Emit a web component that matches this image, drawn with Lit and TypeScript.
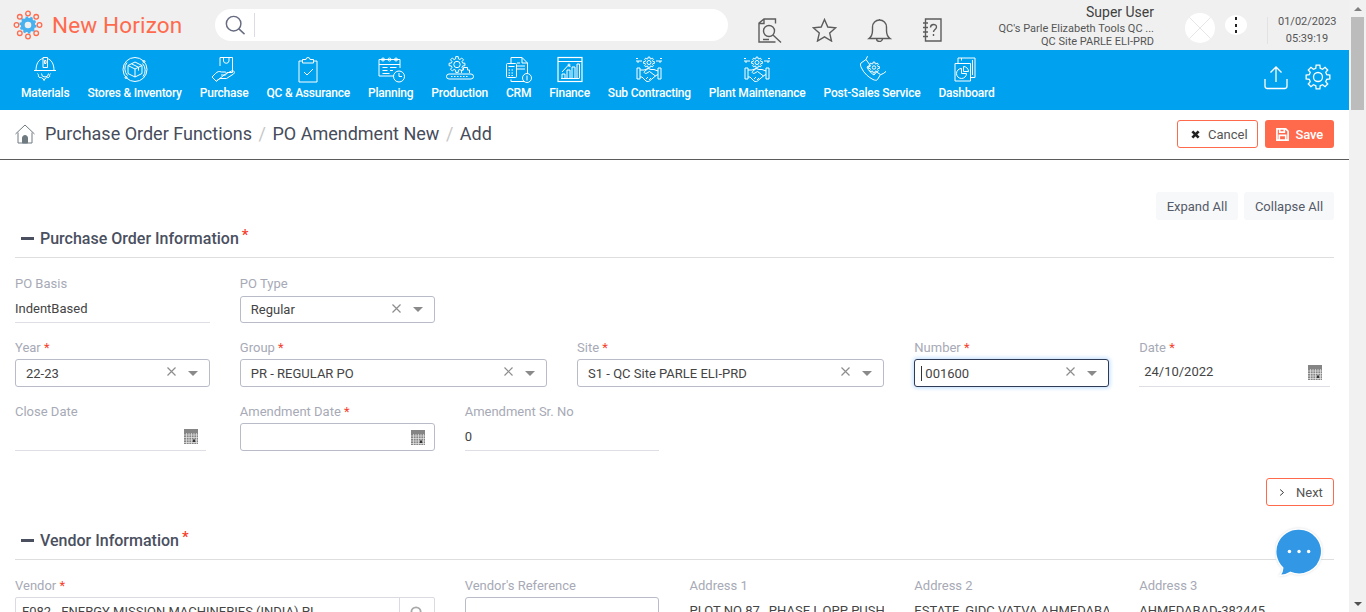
import { LitElement, html, css, svg } from "lit";
import { customElement } from "lit/decorators.js";

function gear(cx: number, cy: number, ro: number, ri: number, n: number): string {
  const pts: string[] = [];
  const step = (Math.PI * 2) / n;
  for (let i = 0; i < n; i++) {
    const a = i * step - Math.PI / 2;
    const w = step * 0.2;
    const p: [number, number][] = [
      [ri, a - step * 0.32],
      [ro, a - w],
      [ro, a + w],
      [ri, a + step * 0.32],
    ];
    for (const [r, t] of p) pts.push(`${(cx + r * Math.cos(t)).toFixed(2)} ${(cy + r * Math.sin(t)).toFixed(2)}`);
  }
  return "M" + pts.join("L") + "Z";
}

const handshake = svg`
  <path d=${gear(14, 6.500, 5.500, 4, 8)}/><circle cx="14" cy="6.500" r="2"/>
  <path d="M1 5h6M21 5h6M1 2.500h2M25 2.500h2M3 5v2M25 5v2"/>
  <path d="M2 12h3v11H2zM23 12h3v11h-3zM5 14h4l4-1.500 3 1h3l4 1.500M5 21h2l4 4c1.500 1 2.500.5 3.500 0l6.500-5.500 2-1M13 12.500l-3.500 3c-1 1.500 1 2.500 2.500 1.500l2.500-1.500 6 4.500M11 23l2-2M14 24l2-2"/>`;

const navIcons: Record<string, unknown> = {
  materials: svg`<path d="M3 14.500h22M5 14.500C5 8 7.500 3.500 12 2.500M23 14.500c0-6.500-2.500-11-7-12M12 11.500V1.500h4.500v10zM13.500 4.500h1.500v3h-1.500z"/>
    <path d="M6.500 17.500c1 1 1.200 1.800.8 2.800l1.700 1.500c.9-.5 1.700-.4 2.300.6h.7l1 2.100h.1l1-2.100h.7c.6-1 1.400-1.100 2.300-.6l1.700-1.500c-.4-1-.2-1.800.8-2.800M10.500 17.500a3.500 3.500 0 0 0 7 0"/>`,
  stores: svg`<circle cx="14" cy="13.500" r="12"/><path d="M6 6.500a10 10 0 0 0 .5 13M22 20.500a10 10 0 0 0-.5-13"/><path d="M14 6l7 3.500v8L14 21l-7-3.500v-8zM7 9.500l7 3.500 7-3.500M14 13v8M10.500 7.800l7 3.500v3.300"/><circle cx="23" cy="5.500" r="1"/><circle cx="5" cy="21.500" r="1"/>`,
  purchase: svg`<path d="M10 10V1.500h12.500v15H17M13.500 1.500V5a2.800 2.800 0 0 0 5.500 0V1.500"/><path d="M2 21l3.500-3.500c2-2 3.500-2.500 6-1.500h3.500c2 0 2 3 0 3h-4M15.500 18l6-3c2.500-1 3.800 1.500 2 3l-7 4.500H10L6.500 25z"/><path d="M2 21l4.500 4.500"/>`,
  qc: svg`<path d="M8.500 5H5v21h18V5h-3.500M8.500 3.500h3.500a2 2 0 0 1 4 0h3.500V7h-11zM10 16l3 3 6-6"/>`,
  planning: svg`<path d="M17 20H2V3.500h21V12"/><path d="M2 8.500h21M5.500 11.500h5M13 11.500h6.500M5.500 14.500h5M13 14.500h3M5.500 17.500h7"/><circle cx="6" cy="3.500" r="1.500"/><circle cx="12.500" cy="3.500" r="1.500"/><circle cx="19" cy="3.500" r="1.500"/><circle cx="22" cy="20.500" r="5.500"/><path d="M22 17v3.500h3"/>`,
  production: svg`<path d=${gear(11, 8.500, 8, 5.800, 8)}/><circle cx="11" cy="8.500" r="3.200"/><path d="M15.500 17v-3h2v-2.500h4V14h2v3"/><path d="M3 18h22a2.500 2.500 0 0 1 0 5H3a2.500 2.500 0 0 1 0-5z"/><path d="M5 20.500h18" stroke-dasharray="1.500 1.500"/>`,
  crm: svg`<path d="M6 7V1.500h11l5.500 5.500v10M17 1.500V7h5.500M6 23.500v2h14M12 10h8M12 13h8M12 7h3"/><rect x="1.500" y="7.500" width="10" height="14" rx="1"/><path d="M3.500 10.500h6M3.500 14h1.500M6.500 14h1.500M3.500 17h1.500M6.500 17h1.500M3.500 19.500h1.500M6.500 19.500h1.500"/><circle cx="22" cy="22" r="4.500"/><path d="M22 19.500v5"/>`,
  finance: svg`<rect x="2" y="1.500" width="24" height="24" stroke-width="1.200"/><path d="M2 5.500h24M5 22.500h18M6 22.500V18h3v4.500M11 22.500V14h3v8.500M16 22.500V11h3v11.500M21 22.500V8h2.500v14.500M6 16l6-6.500 2.500 1"/><circle cx="13" cy="9" r="1"/>`,
  handshake,
  post: svg`<path d="M8 3.500L3 7c-1 1-.5 3 .5 5 2.500 5.500 7.500 9.500 11.500 11.500 2 1 4 1 4.500 0l3-5-4-2.500-2.500 3c-2-1-6-5-7-8l3-2z"/><path d="M8 3.500A12 12 0 1 1 23 18.500"/><path d=${gear(16, 11.500, 5.500, 4, 8)}/><circle cx="16" cy="11.500" r="1.700"/>`,
  dash: svg`<path d="M3 7.500h15.500V25H3zM6 7.500V2h17v19.500h-4.500M20.500 4v15M9.500 2v2.500"/><path d="M9.500 12.500a5 5 0 1 0 5 5h-5z"/><path d="M11.500 10.500a5 5 0 0 1 5 5h-5z"/>`,
};

const navItems: [string, string][] = [
  ["Materials", "materials"],
  ["Stores & Inventory", "stores"],
  ["Purchase", "purchase"],
  ["QC & Assurance", "qc"],
  ["Planning", "planning"],
  ["Production", "production"],
  ["CRM", "crm"],
  ["Finance", "finance"],
  ["Sub Contracting", "handshake"],
  ["Plant Maintenance", "handshake"],
  ["Post-Sales Service", "post"],
  ["Dashboard", "dash"],
];

const star = html`<span class="req">*</span>`;

const calendar = html`<svg class="cal" viewBox="0 0 14 15" width="14" height="15">
  <rect width="14" height="15" fill="#858585"></rect>
  <path d="M2.500 4v11M5 4v11M7.500 4v11M10 4v11M12.500 4v11M0 6h14M0 8.500h14M0 11h14M0 13.500h14" stroke="#e8e8e8" stroke-width=".7"></path>
  <rect x="9" y="10.500" width="2" height="2.500" fill="#333"></rect>
</svg>`;

const gearLogo = html`<svg viewBox="0 0 32 32" width="32" height="32">
  <g fill="none" stroke="#ff6a4d" stroke-width="1.300">
    <circle cx="16" cy="4.500" r="2.300"></circle><circle cx="16" cy="27.500" r="2.300"></circle>
    <circle cx="4.500" cy="16" r="2.300"></circle><circle cx="27.500" cy="16" r="2.300"></circle>
    <circle cx="7.800" cy="7.800" r="2.300"></circle><circle cx="24.200" cy="7.800" r="2.300"></circle>
    <circle cx="7.800" cy="24.200" r="2.300"></circle><circle cx="24.200" cy="24.200" r="2.300"></circle>
  </g>
  <circle cx="16" cy="16" r="5.300" fill="none" stroke="#46b1ee" stroke-width="4"></circle>
  <circle cx="16" cy="16" r="7.700" fill="none" stroke="#46b1ee" stroke-width="1.800" stroke-dasharray="2.500 2.300"></circle>
</svg>`;

@customElement("app-root")
export class AppRoot extends LitElement {
  static styles = css`
    :host {
      display: flex;
      width: 1366px;
      height: 612px;
      overflow: hidden;
      position: relative;
      background: #fff;
      font-family: Roboto, "Liberation Sans", sans-serif;
      color: #444a57;
    }
    * { box-sizing: border-box; }
    .page { width: 1349px; flex: none; height: 612px; overflow: hidden; }

    .sb { width: 17px; background: #f1f1f1; position: relative; display: flex; flex-direction: column; align-items: center; }
    .sb-btn { height: 17px; flex: none; display: flex; align-items: center; justify-content: center; width: 100%; }
    .sb-up { width: 0; height: 0; border: 4px solid transparent; border-top: 0; border-bottom: 4px solid #7f7f7f; }
    .sb-down { width: 0; height: 0; border: 4px solid transparent; border-bottom: 0; border-top: 4px solid #505050; }
    .sb-track { flex: 1; width: 100%; padding: 0 2px; }
    .sb-thumb { height: 93px; background: #bcbcbc; width: 13px; }

    .top { height: 50px; background: #f0f0f0; display: flex; align-items: stretch; }
    .logo { width: 215px; flex: none; display: flex; align-items: center; padding-left: 12px; }
    .logo svg { flex: none; margin-right: 8px; }
    .logo span { font-size: 22.500px; color: #ff6a4d; letter-spacing: 0.15px; white-space: nowrap; }
    .search { width: 513px; height: 32px; margin-top: 9px; background: #fff; border-radius: 16px; display: flex; align-items: center; padding-left: 10px; flex: none; }
    .search svg { flex: none; }
    .search i { width: 1px; height: 24px; background: #dcdde3; margin-left: 9px; display: block; }
    .ticons { display: flex; gap: 30px; margin-left: 30px; padding-top: 18px; flex: none; align-items: flex-start; }
    .ticons svg { display: block; fill: none; stroke: #5c5c5c; stroke-width: 1.400; }
    .user { flex: none; width: 212px; text-align: right; padding-top: 4px; white-space: nowrap; display: flex; flex-direction: column; }
    .user b { font-weight: 400; font-size: 14px; line-height: 17px; color: #3f3f3f; }
    .user span { font-size: 11px; line-height: 13px; color: #555; }
    .user span.a { margin-top: 1px; }
    .avatar { flex: none; width: 30px; height: 30px; border-radius: 50%; background: #fff; margin: 13px 0 0 31px; overflow: hidden; }
    .avatar svg { display: block; }
    .kebab { flex: none; width: 22px; height: 20px; border-radius: 50%; background: #fff; margin: 15px 0 0 10px; display: flex; flex-direction: column; align-items: center; justify-content: center; gap: 3.500px; }
    .kebab i { width: 2.500px; height: 3px; background: #222; display: block; }
    .dt { flex: none; margin: 13px 0 0 20px; padding-left: 11px; width: 69px; font-size: 11px; line-height: 17px; text-align: center; color: #555; white-space: nowrap; position: relative; }
    .dt::before { content: ""; position: absolute; left: 0; top: 4px; width: 1px; height: 27px; background: #e2e2e2; }

    .nav { height: 60px; background: #00a2ef; display: flex; align-items: flex-start; padding-left: 12px; position: relative; }
    .ni { padding: 6px 9px 0; display: flex; flex-direction: column; align-items: center; color: #fff; font-size: 12px; font-weight: 500; white-space: nowrap; }
    .ni svg { display: block; fill: none; stroke: #fff; stroke-width: 1; margin: 0 -10px 3px; }
    .ni span { line-height: 14px; letter-spacing: -0.22px; }
    .nav-r { margin-left: auto; display: flex; gap: 16px; padding: 14px 18px 0 0; }
    .nav-r svg { display: block; fill: none; stroke: #fff; stroke-width: 1.300; }

    .crumbs { height: 50px; border-bottom: 1px solid #5b5b5b; display: flex; align-items: flex-start; padding: 10px 15px 0; }
    .crumbs svg.home { flex: none; margin: 4px 10px 0 0; }
    .crumbs .t { font-size: 18px; line-height: 28px; color: #464c5a; white-space: nowrap; }
    .crumbs .t u { text-decoration: none; color: #c7c7c7; margin: 0 6.500px; }
    .crumbs .acts { margin-left: auto; display: flex; gap: 7px; }
    .btn { height: 28px; border-radius: 3px; font-size: 13px; display: flex; align-items: center; white-space: nowrap; }
    .btn-o { border: 1px solid #ff6a4d; background: #fff; color: #555; }
    .btn-cancel { width: 81px; padding-left: 13px; gap: 8px; }
    .btn-save { width: 69px; background: #ff6a4d; color: #fff; padding-left: 11px; gap: 6.500px; font-weight: 500; letter-spacing: -0.1px; }
    .btn-next { width: 68px; padding-left: 12px; gap: 11px; }

    .exp { display: flex; justify-content: flex-end; gap: 6px; padding: 32px 15px 0; }
    .btn-l { height: 28px; background: #f7f8fa; border-radius: 3px; font-size: 13px; color: #555b68; display: flex; align-items: center; justify-content: center; width: 90px; }
    .btn-l.w82 { width: 82px; }

    .sec { margin: 0 15px; height: 38px; border-bottom: 1px solid #dedede; display: flex; align-items: flex-start; font-size: 16px; font-weight: 500; color: #4a5060; padding: 9px 0 0 6px; line-height: 20px; white-space: nowrap; }
    .sec i { display: block; width: 13px; height: 2.500px; background: #4a5060; margin: 8px 6px 0 0; }
    .sec .req { font-size: 15px; margin-left: 3px; line-height: 14px; margin-top: -1px; }

    .grid { display: grid; grid-template-columns: repeat(12, 1fr); grid-auto-rows: 64px; width: 1349px; margin-top: 19px; }
    .c { padding: 0 15px; min-width: 0; }
    .s2 { grid-column: span 2; }
    .s3 { grid-column: span 3; }
    .s4 { grid-column: span 4; }
    .s8 { grid-column: span 8; }
    .lbl { font-size: 13px; line-height: 14px; height: 14px; color: #a7aab6; white-space: nowrap; margin-bottom: 4px; }
    .lbl.b5 { margin-bottom: 5px; }
    .req { color: #f5402c; }
    .ctl { height: 28px; border: 1px solid #b9bcc8; border-radius: 3px; display: flex; align-items: center; padding: 0 10px; font-size: 13px; color: #444; position: relative; white-space: nowrap; background: #fff; }
    .ctl .v { flex: 1; padding-top: 1px; }
    .t27 .ctl { height: 27px; }
    .t27 .v { padding-top: 0; }
    .ctl .x { width: 9px; height: 9px; flex: none; margin: -3px 12px 0 0; }
    .ctl .ar { width: 0; height: 0; border: 5px solid transparent; border-bottom: 0; border-top: 5px solid #8a8a8a; margin-right: 1px; flex: none; }
    .focus { border-color: #2f3a55; box-shadow: 0 0 4px 1px #bcdcff; }
    .focus .caret { width: 1px; height: 15px; background: #333; margin: 0 3px 0 -4px; flex: none; }
    .line { height: 28px; border-bottom: 1px solid #dedfe4; font-size: 13px; color: #444; display: flex; align-items: center; white-space: nowrap; justify-content: space-between; overflow: hidden; }
    .line.w191 { width: 191px; }
    .line.pad { padding: 0 8px 0 5px; }
    .line.pad span { margin-bottom: 3px; }
    .line.mt1 { margin-top: 1px; padding-bottom: 1px; }
    .ctl.cal-ctl { justify-content: flex-end; padding-right: 9px; }
    .ctl.cal-ctl svg { margin-top: 1px; }
    .cal { display: block; flex: none; }

    .next { display: flex; justify-content: flex-end; padding: 0 15px; margin-top: 9px; }
    .vendor { height: 600px; }
    .vctl { height: 40px; border: 1px solid #dadbe1; border-radius: 2px 2px 0 0; display: flex; font-size: 13px; color: #444; }
    .vctl .v { flex: 1; padding: 6px 6px; white-space: nowrap; overflow: hidden; }
    .vctl .b { width: 35px; border-left: 1px solid #dadbe1; display: flex; justify-content: center; padding-top: 8px; }
    .vref { height: 40px; border: 1px solid #b9bcc8; border-radius: 3px; }
    .addr { font-size: 13px; color: #444; white-space: nowrap; overflow: hidden; padding-top: 6px; }

    .chat { position: absolute; left: 1276px; top: 528px; display: block; filter: drop-shadow(0 0 1px #ddd); }
  `;

  private sel(v: string, focus = false) {
    return html`<div class="ctl ${focus ? "focus" : ""}">
      ${focus ? html`<span class="caret"></span>` : ""}
      <span class="v">${v}</span>
      <svg class="x" viewBox="0 0 9 9"><path d="M.5.5l8 8M8.500.5l-8 8" stroke="#8d8d8d" stroke-width="1.200"></path></svg>
      <span class="ar"></span>
    </div>`;
  }

  render() {
    return html`
      <div class="page">
        <header class="top">
          <div class="logo">${gearLogo}<span>New Horizon</span></div>
          <div class="search">
            <svg viewBox="0 0 22 22" width="20" height="20" fill="none" stroke="#666b80" stroke-width="1.600"><circle cx="9.500" cy="9.500" r="8"></circle><path d="M15 15l6.500 6"></path></svg>
            <i></i>
          </div>
          <div class="ticons">
            <svg viewBox="0 0 24 25" width="24" height="25"><path d="M17.500 5.500V1H6L1 5v19h16.500M6 1v4.500H1"/><circle cx="11" cy="13" r="5.500"/><path d="M15 17l8 7.500M5 21.500h6"/></svg>
            <svg viewBox="0 0 25 24" width="25" height="24"><path d="M12.500 1.500l3.300 7.500 7.900.8-6 5.300 1.800 7.900-7-4.200-7 4.200 1.800-7.900-6-5.300 7.900-.8z"/></svg>
            <svg viewBox="0 0 25 24" width="25" height="24"><path d="M2 20.500c2-1.500 3.500-3 3.500-8V9a7 7 0 0 1 14 0v3.500c0 5 1.500 6.500 3.500 8zM9.500 20.500a3 3 0 0 0 6 0M12.500 2V1"/></svg>
            <svg viewBox="0 0 20 24" width="20" height="24"><path d="M3.500 1h15.500v22H3.500zM1 5h5M1 9.500h5M1 14h5M1 18.500h5"/><path d="M8.500 9.500c0-4 6-4 6-.5 0 2.500-3 2.500-3 5M11.500 16v2"/></svg>
          </div>
          <div class="user">
            <b>Super User</b>
            <span class="a">QC's Parle Elizabeth Tools QC ...</span>
            <span>QC Site PARLE ELI-PRD</span>
          </div>
          <div class="avatar"><svg viewBox="0 0 30 30" width="30" height="30"><path d="M4 4l22 22M26 4L4 26" stroke="#e6e6e6" stroke-width="1"></path></svg></div>
          <div class="kebab"><i></i><i></i><i></i></div>
          <div class="dt">01/02/2023<br />05:39:19</div>
        </header>

        <nav class="nav">
          ${navItems.map(
            ([t, ic]) => html`<div class="ni">
              <svg viewBox="0 0 28 27" width="28" height="27">${navIcons[ic]}</svg>
              <span>${t}</span>
            </div>`
          )}
          <div class="nav-r">
            <svg viewBox="0 0 26 26" width="26" height="26"><path d="M13 18V3M7.500 8.500L13 3l5.500 5.500M2 15v7c0 1.500 1 2.500 2.500 2.500h17c1.500 0 2.500-1 2.500-2.500v-7"></path></svg>
            <svg viewBox="0 0 26 26" width="26" height="26"><circle cx="13" cy="13" r="4.500"></circle><path d=${gear(13, 13, 12, 9, 8)}></path></svg>
          </div>
        </nav>

        <div class="crumbs">
          <svg class="home" viewBox="0 0 20 20" width="20" height="20" fill="none" stroke="#6f7a80" stroke-width="1"><path d="M.5 10L10 1l9.500 9M3 8.500V19h14V8.500"></path><path d="M7.500 19v-5a2.500 2.500 0 0 1 5 0v5z" fill="#6f7a80"></path></svg>
          <div class="t">Purchase Order Functions<u>/</u>PO Amendment New<u>/</u>Add</div>
          <div class="acts">
            <div class="btn btn-o btn-cancel"><svg viewBox="0 0 10 10" width="9" height="9"><path d="M1.500 1.500l7 7M8.500 1.500l-7 7" stroke="#222" stroke-width="3"></path></svg>Cancel</div>
            <div class="btn btn-save"><svg viewBox="0 0 14 14" width="13" height="13" fill="none" stroke="#fff" stroke-width="1.800"><path d="M1 1h9.500L13 3.500V13H1zM4 1v3.500h5V1M3.500 13V8h7v5"></path></svg>Save</div>
          </div>
        </div>

        <div class="exp">
          <div class="btn-l w82">Expand All</div>
          <div class="btn-l">Collapse All</div>
        </div>

        <div class="sec"><i></i>Purchase Order Information${star}</div>

        <div class="grid">
          <div class="c s2"><div class="lbl">PO Basis</div><div class="line mt1">IndentBased</div></div>
          <div class="c s2 t27"><div class="lbl b5">PO Type</div><div>${this.sel("Regular")}</div></div>
          <div class="c s8"></div>

          <div class="c s2"><div class="lbl">Year ${star}</div>${this.sel("22-23")}</div>
          <div class="c s3"><div class="lbl">Group ${star}</div>${this.sel("PR - REGULAR PO")}</div>
          <div class="c s3"><div class="lbl">Site ${star}</div>${this.sel("S1 - QC Site PARLE ELI-PRD")}</div>
          <div class="c s2"><div class="lbl">Number ${star}</div>${this.sel("001600", true)}</div>
          <div class="c s2"><div class="lbl">Date ${star}</div><div class="line w191 pad"><span>24/10/2022</span>${calendar}</div></div>

          <div class="c s2"><div class="lbl">Close Date</div><div class="line w191 pad"><span></span>${calendar}</div></div>
          <div class="c s2"><div class="lbl">Amendment Date ${star}</div><div class="ctl cal-ctl">${calendar}</div></div>
          <div class="c s2"><div class="lbl">Amendment Sr. No</div><div class="line">0</div></div>
        </div>

        <div class="next"><div class="btn btn-o btn-next"><svg viewBox="0 0 8 10" width="6" height="9" fill="none" stroke="#333" stroke-width="1.300"><path d="M1.500 1l4.500 4-4.500 4"></path></svg>Next</div></div>

        <div class="sec" style="margin-top:16px"><i></i>Vendor Information${star}</div>

        <div class="grid vendor">
          <div class="c s4"><div class="lbl">Vendor ${star}</div><div class="vctl"><div class="v">F082 - ENERGY MISSION MACHINERIES (INDIA) PI</div><div class="b"><svg viewBox="0 0 14 14" width="13" height="13" fill="none" stroke="#a9a9a9" stroke-width="2"><circle cx="6.500" cy="6.500" r="5"></circle></svg></div></div></div>
          <div class="c s2"><div class="lbl">Vendor's Reference</div><div class="vref"></div></div>
          <div class="c s2"><div class="lbl">Address 1</div><div class="addr">PLOT NO 87 , PHASE I, OPP PUSH</div></div>
          <div class="c s2"><div class="lbl">Address 2</div><div class="addr">ESTATE, GIDC VATVA AHMEDABA</div></div>
          <div class="c s2"><div class="lbl">Address 3</div><div class="addr">AHMEDABAD-382445</div></div>
        </div>
      </div>

      <aside class="sb">
        <div class="sb-btn"><span class="sb-up"></span></div>
        <div class="sb-track"><div class="sb-thumb"></div></div>
        <div class="sb-btn"><span class="sb-down"></span></div>
      </aside>

      <svg class="chat" viewBox="0 0 50 52" width="48" height="50">
        <path d="M24 1a23.500 23.500 0 1 1-9 45.200c-3 2-7 3.300-11 3.300 2-2.500 3-5 3-8A23.500 23.500 0 0 1 24 1z" fill="#3298e6" stroke="#fff" stroke-width="1.500"></path>
        <circle cx="14" cy="24.500" r="1.800" fill="#fff"></circle><circle cx="24" cy="24.500" r="1.800" fill="#fff"></circle><circle cx="34" cy="24.500" r="1.800" fill="#fff"></circle>
      </svg>
    `;
  }
}
